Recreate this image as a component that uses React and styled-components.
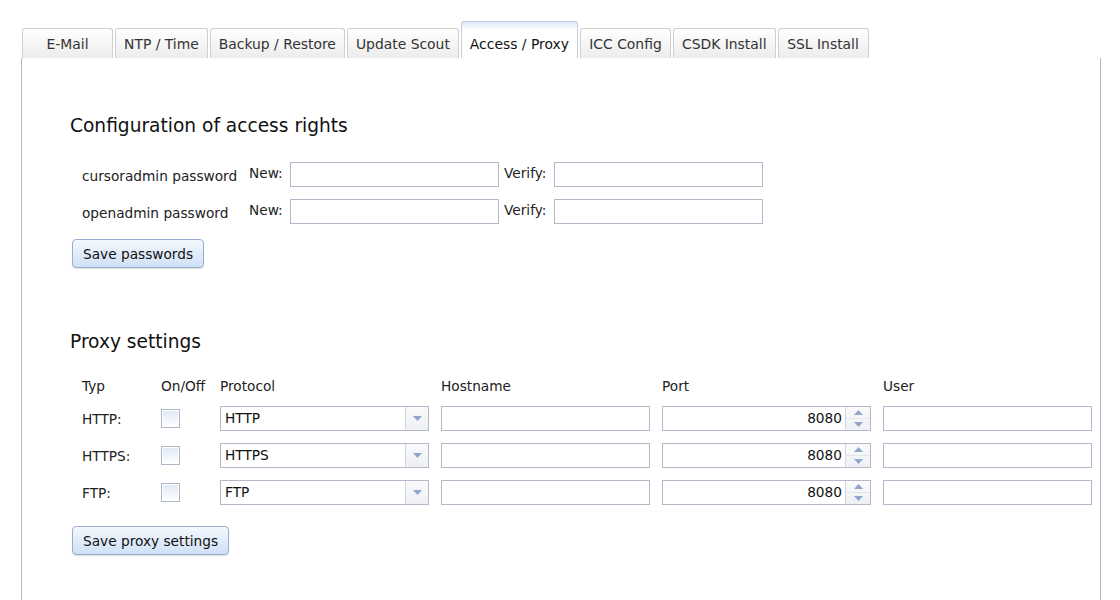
import React from 'react';
import styled, { createGlobalStyle } from 'styled-components';

const GlobalStyle = createGlobalStyle`
  html, body {
    margin: 0;
    padding: 0;
    background: #fff;
    font-family: "DejaVu Sans", Verdana, sans-serif;
    font-size: 13.7px;
    color: #222;
    overflow: hidden;
  }
`;

const Page = styled.div`
  padding: 21px 0 0 21px;
  height: 600px;
  box-sizing: border-box;
  display: flex;
  flex-direction: column;
`;

const TabBar = styled.div`
  display: flex;
  align-items: flex-end;
  column-gap: 2px;
  padding-left: 1px;
  height: 37px;
`;

const Tab = styled.div`
  box-sizing: border-box;
  height: ${p => (p.active ? '37px' : '30px')};
  min-width: ${p => p.w || 0}px;
  padding: ${p => (p.active ? '14px 8px 0' : '7px 8px 0')};
  text-align: center;
  white-space: nowrap;
  border: 1px solid ${p => (p.active ? '#c3cfe0' : '#cfcfcf')};
  border-bottom: none;
  border-radius: 3px 3px 0 0;
  background: ${p =>
    p.active
      ? 'linear-gradient(#dde8f6 0px, #ffffff 8px, #ffffff 100%)'
      : 'linear-gradient(#ffffff, #ececec)'};
  color: ${p => (p.active ? '#111' : '#333')};
  font-size: 13.9px;
  line-height: 16px;
`;

const Panel = styled.div`
  flex: 1;
  width: 1080px;
  box-sizing: border-box;
  border-left: 1px solid #b5b8c8;
  border-right: 1px solid #b5b8c8;
  padding: 56px 0 0 48px;
`;

const Heading = styled.h2`
  margin: 0;
  font-size: 18.6px;
  font-weight: normal;
  line-height: 24px;
  color: #111;
`;

const PasswordGrid = styled.div`
  display: grid;
  grid-template-columns: 167px 41px 209px 55px 209px;
  grid-auto-rows: 25px;
  row-gap: 12px;
  align-items: center;
  margin: 24px 0 0 12px;
`;

const RowLabel = styled.span`
  white-space: nowrap;
  color: #222;
  padding-top: ${p => p.drop || 0}px;
`;

const FieldLabel = styled.span`
  white-space: nowrap;
  color: #222;
  margin-top: -4px;
  padding-left: ${p => p.indent || 0}px;
`;

const TextInput = styled.input`
  box-sizing: border-box;
  width: 209px;
  height: 25px;
  margin: 0;
  border: 1px solid #b5b8c8;
  background: #fff;
  padding: 0 4px;
  font-family: "DejaVu Sans", Verdana, sans-serif;
  font-size: 13.7px;
  color: #000;
  outline: none;
`;

const Button = styled.button`
  box-sizing: border-box;
  height: 29px;
  padding: 0 10px;
  border: 1px solid #98aed0;
  border-radius: 4px;
  background: linear-gradient(#f4f8fd, #cfe0f6);
  box-shadow: 0 1px 1px rgba(0, 0, 0, 0.12);
  font-family: "DejaVu Sans", Verdana, sans-serif;
  font-size: 13.7px;
  color: #111;
  cursor: pointer;
  margin: ${p => p.top}px 0 0 2px;
`;

const ProxyHeading = styled(Heading)`
  margin-top: 62px;
`;

const ProxyGrid = styled.div`
  display: grid;
  grid-template-columns: 79px 59px 221px 221px 221px 209px;
  grid-template-rows: 20px repeat(3, 25px);
  row-gap: 12px;
  align-items: center;
  margin: 20px 0 0 12px;
`;

const HeadCell = styled.span`
  white-space: nowrap;
  color: #222;
  align-self: end;
`;

const CheckBox = styled.span`
  box-sizing: border-box;
  display: block;
  width: 19px;
  height: 19px;
  border: 1px solid #b0b5c2;
  box-shadow: inset 0 0 0 1px #fff;
  background: linear-gradient(#dde8f5, #ffffff);
`;

const Combo = styled.div`
  box-sizing: border-box;
  width: 209px;
  height: 25px;
  display: flex;
  border: 1px solid #b5b8c8;
  background: #fff;
`;

const ComboText = styled.span`
  flex: 1;
  padding-left: 4px;
  line-height: 23px;
  color: #111;
`;

const Trigger = styled.span`
  width: 22px;
  display: flex;
  align-items: center;
  justify-content: center;
  border-left: 1px solid #d4d7e0;
  background: linear-gradient(#fafafa, #eef0f4);
`;

const PortBox = styled(Combo)``;

const PortValue = styled.span`
  flex: 1;
  text-align: right;
  padding-right: 3px;
  line-height: 23px;
  color: #111;
`;

const Spinner = styled.span`
  width: 24px;
  display: flex;
  flex-direction: column;
  border-left: 1px solid #d4d7e0;
  background: linear-gradient(#fafafa, #eef0f4);
`;

const SpinHalf = styled.span`
  flex: 1;
  display: flex;
  align-items: center;
  justify-content: center;
  border-top: ${p => (p.lower ? '1px solid #e2e5ec' : 'none')};
`;

const Arrow = ({ up }) => (
  <svg width="9" height="5" viewBox="0 0 9 5">
    <path d={up ? 'M0 5 L4.5 0 L9 5 Z' : 'M0 0 L4.5 5 L9 0 Z'} fill="#8fa5cc" />
  </svg>
);

const tabs = [
  { label: 'E-Mail', w: 91 },
  { label: 'NTP / Time' },
  { label: 'Backup / Restore' },
  { label: 'Update Scout' },
  { label: 'Access / Proxy', active: true },
  { label: 'ICC Config', w: 91 },
  { label: 'CSDK Install' },
  { label: 'SSL Install', w: 91 },
];

const proxies = [
  { type: 'HTTP:', protocol: 'HTTP' },
  { type: 'HTTPS:', protocol: 'HTTPS' },
  { type: 'FTP:', protocol: 'FTP' },
];

const App = () => (
  <React.Fragment>
    <GlobalStyle />
    <Page>
      <TabBar>
        {tabs.map(t => (
          <Tab key={t.label} active={t.active} w={t.w}>
            {t.label}
          </Tab>
        ))}
      </TabBar>
      <Panel>
        <Heading>Configuration of access rights</Heading>
        <PasswordGrid>
          <RowLabel drop={2}>cursoradmin password</RowLabel>
          <FieldLabel>New:</FieldLabel>
          <TextInput type="password" />
          <FieldLabel indent={5}>Verify:</FieldLabel>
          <TextInput type="password" />
          <RowLabel drop={2}>openadmin password</RowLabel>
          <FieldLabel>New:</FieldLabel>
          <TextInput type="password" />
          <FieldLabel indent={5}>Verify:</FieldLabel>
          <TextInput type="password" />
        </PasswordGrid>
        <Button top={15}>Save passwords</Button>

        <ProxyHeading>Proxy settings</ProxyHeading>
        <ProxyGrid>
          <HeadCell>Typ</HeadCell>
          <HeadCell>On/Off</HeadCell>
          <HeadCell>Protocol</HeadCell>
          <HeadCell>Hostname</HeadCell>
          <HeadCell>Port</HeadCell>
          <HeadCell>User</HeadCell>
          {proxies.map(p => (
            <React.Fragment key={p.type}>
              <RowLabel>{p.type}</RowLabel>
              <CheckBox />
              <Combo>
                <ComboText>{p.protocol}</ComboText>
                <Trigger>
                  <Arrow />
                </Trigger>
              </Combo>
              <TextInput />
              <PortBox>
                <PortValue>8080</PortValue>
                <Spinner>
                  <SpinHalf>
                    <Arrow up />
                  </SpinHalf>
                  <SpinHalf lower>
                    <Arrow />
                  </SpinHalf>
                </Spinner>
              </PortBox>
              <TextInput />
            </React.Fragment>
          ))}
        </ProxyGrid>
        <Button top={21}>Save proxy settings</Button>
      </Panel>
    </Page>
  </React.Fragment>
);

export default App;
